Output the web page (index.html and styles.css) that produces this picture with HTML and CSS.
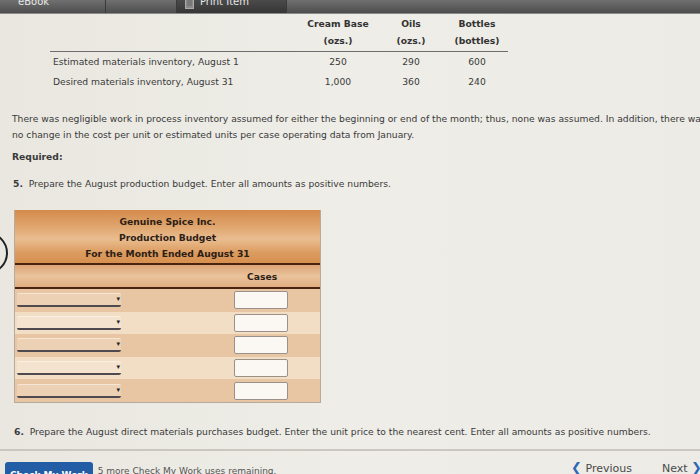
FILE: index.html
```html
<!DOCTYPE html>
<html>
<head>
<meta charset="utf-8">
<link rel="stylesheet" href="styles.css">
</head>
<body>
<div class="topbar">
  <div class="tab tab-ebook"><span class="tab-text">eBook</span></div>
  <div class="tab tab-blank"></div>
  <div class="tab tab-print">
    <svg class="print-icon" width="9" height="11" viewBox="0 0 9 11"><rect x="0.5" y="0.5" width="8" height="10" fill="#8a8a8a" stroke="#aaa"/><line x1="2" y1="3" x2="7" y2="3" stroke="#666"/><line x1="2" y1="5" x2="7" y2="5" stroke="#666"/><line x1="2" y1="7" x2="7" y2="7" stroke="#666"/></svg>
    <span class="tab-text">Print Item</span>
  </div>
  <div class="tab tab-rest"></div>
</div>

<div class="page">
  <table class="inv">
    <thead>
      <tr>
        <th class="lbl"></th>
        <th class="c1">Cream Base<br>(ozs.)</th>
        <th class="c2">Oils<br>(ozs.)</th>
        <th class="c3">Bottles<br>(bottles)</th>
      </tr>
    </thead>
    <tbody>
      <tr class="r1"><td class="lbl">Estimated materials inventory, August 1</td><td>250</td><td>290</td><td>600</td></tr>
      <tr class="r2"><td class="lbl">Desired materials inventory, August 31</td><td>1,000</td><td>360</td><td>240</td></tr>
    </tbody>
  </table>

  <p class="para">There was negligible work in process inventory assumed for either the beginning or end of the month; thus, none was assumed. In addition, there was no change in the cost per unit or estimated units per case operating data from January.</p>
  <p class="req">Required:</p>
  <p class="step"><b>5.</b>&nbsp; Prepare the August production budget. Enter all amounts as positive numbers.</p>

  <div class="budget-wrap">
    <div class="arc"></div>
    <div class="budget">
      <div class="bhead">
        <div>Genuine Spice Inc.</div>
        <div>Production Budget</div>
        <div>For the Month Ended August 31</div>
      </div>
      <div class="bcases"><span class="cases">Cases</span></div>
      <div class="brow dark"><div class="sel"><span class="caret">▾</span></div><div class="inp"></div></div>
      <div class="brow light"><div class="sel"><span class="caret">▾</span></div><div class="inp"></div></div>
      <div class="brow dark"><div class="sel"><span class="caret">▾</span></div><div class="inp"></div></div>
      <div class="brow light"><div class="sel"><span class="caret">▾</span></div><div class="inp"></div></div>
      <div class="brow dark"><div class="sel"><span class="caret">▾</span></div><div class="inp"></div></div>
    </div>
  </div>

  <p class="step step6"><b>6.</b>&nbsp; Prepare the August direct materials purchases budget. Enter the unit price to the nearest cent. Enter all amounts as positive numbers.</p>
</div>

<div class="footer">
  <div class="footer-left">
    <div class="cmw">Check My Work</div>
    <span class="remain">5 more Check My Work uses remaining.</span>
  </div>
  <div class="footer-right">
    <span class="nav"><span class="chev">❮</span> Previous</span>
    <span class="nav next">Next <span class="chev">❯</span></span>
  </div>
</div>
</body>
</html>
```

FILE: styles.css
```css
html, body {
  margin: 0;
  padding: 0;
  height: 474px;
  overflow: hidden;
}
body {
  background: linear-gradient(90deg, #e9e7e0 0%, #eeede7 50%, #ecebe5 100%);
  font-family: "DejaVu Sans", Verdana, sans-serif;
  font-size: 9.2px;
  color: #3a3a3a;
}
.topbar {
  height: 13px;
  display: flex;
  background: linear-gradient(#707070, #4d4d4d);
  border-bottom: 1px solid #8a8a8a;
  overflow: hidden;
}
.tab {
  height: 13px;
  border-right: 1px solid #3a3a3a;
  position: relative;
}
.tab-text {
  color: #e6e6e6;
  font-size: 10px;
  line-height: 8px;
  display: block;
  margin-top: -2px;
}
.tab-ebook { width: 106px; padding-left: 18px; box-sizing: border-box; }
.tab-blank { width: 70px; }
.tab-print {
  width: 110px;
  display: flex;
  gap: 6px;
  padding-left: 8px;
  box-sizing: border-box;
  background: linear-gradient(#4a4a4a, #363636);
}
.print-icon { margin-top: -2px; }
.tab-rest { flex: 1; border-right: none; }

.page { padding: 0 12px; }

.inv {
  border-collapse: collapse;
  margin-left: 38px;
  margin-top: 1px;
}
.inv th {
  font-weight: bold;
  line-height: 17px;
  padding: 0 0 2px;
  border-bottom: 1px solid #6d6d6d;
  color: #333;
}
.inv td {
  text-align: center;
  padding: 0;
}
.inv .r1 td { height: 19px; }
.inv .r2 td { height: 21px; }
.inv td.lbl { text-align: left; padding-left: 3px; }
.inv .lbl { width: 247px; }
.inv .c1 { width: 76px; }
.inv .c2 { width: 70px; }
.inv .c3 { width: 62px; }

.para {
  margin: 19px 0 0;
  line-height: 16px;
  width: 697px;
}
.req {
  margin: 6px 0 0;
  font-weight: bold;
  line-height: 16px;
}
.step {
  margin: 11px 0 0;
  line-height: 16px;
  padding-left: 1px;
}
.budget-wrap {
  position: relative;
  margin-top: 18px;
  margin-left: 2px;
}
.arc {
  position: absolute;
  left: -48px;
  top: 22px;
  width: 38px;
  height: 38px;
  border: 2px solid #222;
  border-radius: 50%;
}
.budget {
  width: 305px;
  border: 1px solid #b6aa9a;
  border-top: none;
  background: #f1dfc6;
}
.bhead {
  background: linear-gradient(#d48b4c 0%, #dfa46c 30%, #e9bd90 55%, #dc9c60 80%, #d6904f 100%);
  text-align: center;
  font-weight: bold;
  color: #2c2016;
  line-height: 16px;
  padding: 4px 0 1px;
  border-bottom: 2px solid #4a2410;
}
.bcases {
  height: 22px;
  background: linear-gradient(#dca577, #eac39c 50%, #e0ae80);
  border-bottom: 2px solid #4a2410;
  display: flex;
  align-items: center;
}
.cases {
  font-weight: bold;
  color: #2c2016;
  margin-left: 232px;
}
.brow {
  height: 22.6px;
  display: flex;
  align-items: center;
}
.brow.dark { background: #e8c6a3; }
.brow.light { background: #f2dec4; }
.sel {
  width: 104px;
  height: 11px;
  margin-left: 2px;
  border-top: 1px solid rgba(255,255,255,0.45);
  border-bottom: 2px solid #4e4a50;
  border-radius: 2px;
  background: rgba(255,255,255,0.2);
  position: relative;
}
.caret {
  position: absolute;
  right: 1px;
  top: 0;
  font-size: 7px;
  line-height: 10px;
  color: #222;
}
.inp {
  width: 52px;
  height: 16px;
  margin-left: 113px;
  background: #fbf8f3;
  border: 1px solid #9a928a;
  border-radius: 2px;
}
.step6 {
  margin-top: 21px;
  padding-left: 2px;
}

.footer {
  margin-top: 9px;
  border-top: 2px solid #c9c7c0;
  display: flex;
  justify-content: space-between;
  align-items: flex-start;
  padding-top: 11px;
}
.footer-left {
  display: flex;
  align-items: flex-start;
  gap: 5px;
  padding-left: 5px;
}
.cmw {
  background: #235da6;
  color: #fff;
  font-weight: bold;
  font-size: 9px;
  padding: 8px 5px 3px;
  border-radius: 3px 3px 0 0;
  line-height: 10px;
}
.remain {
  font-size: 9px;
  color: #555;
  padding-top: 4px;
  line-height: 10px;
}
.footer-right {
  display: flex;
  gap: 30px;
}
.nav {
  font-size: 11px;
  color: #4a4a4a;
  line-height: 12px;
}
.chev {
  color: #2f67b5;
  font-weight: bold;
  font-size: 13px;
}
.next { margin-right: -2px; }
```
